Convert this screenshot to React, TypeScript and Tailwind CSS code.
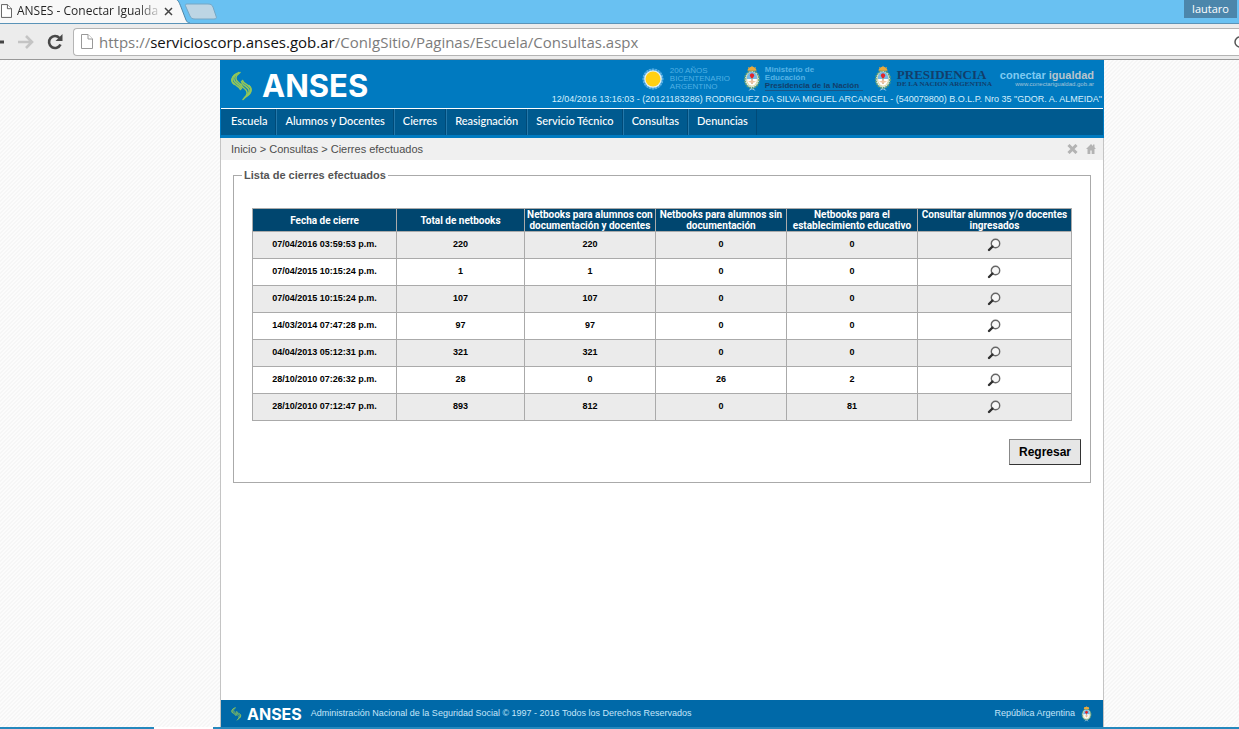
import React from "react";

const NAV = ["Escuela", "Alumnos y Docentes", "Cierres", "Reasignación", "Servicio Técnico", "Consultas", "Denuncias"];

const COLUMNS = [
  "Fecha de cierre",
  "Total de netbooks",
  "Netbooks para alumnos con documentación y docentes",
  "Netbooks para alumnos sin documentación",
  "Netbooks para el establecimiento educativo",
  "Consultar alumnos y/o docentes ingresados",
];

const ROWS: [string, number, number, number, number][] = [
  ["07/04/2016 03:59:53 p.m.", 220, 220, 0, 0],
  ["07/04/2015 10:15:24 p.m.", 1, 1, 0, 0],
  ["07/04/2015 10:15:24 p.m.", 107, 107, 0, 0],
  ["14/03/2014 07:47:28 p.m.", 97, 97, 0, 0],
  ["04/04/2013 05:12:31 p.m.", 321, 321, 0, 0],
  ["28/10/2010 07:26:32 p.m.", 28, 0, 26, 2],
  ["28/10/2010 07:12:47 p.m.", 893, 812, 0, 81],
];

function AnsesMark({ className }: { className: string }) {
  return (
    <svg viewBox="0 0 22 30" className={className} fill="none" stroke="#93c759" strokeWidth="1.500" strokeLinecap="round" aria-hidden="true">
      <path d="M5.500 2.500C-.5 6.500 0 11 4 13.500c3 2 5 3 5.500 5" />
      <path d="M7.500 1.500C1 6 2 10 6 12.500c2.500 1.500 4 3 4.500 5" />
      <path d="M9 1.500C3.500 5.500 4 9 7.500 11.500c2 1.500 3.500 3 3.500 4.500" />
      <path d="M3.500 4C-.5 8 .5 11 3 13" />
      <path d="M16.500 27.500C22.500 23.500 22 19 18 16.500c-3-2-5-3-5.500-5" transform="translate(-1 -2)" />
      <path d="M14.500 28.500C21 24 20 20 16 17.500c-2.500-1.500-4-3-4.500-5" transform="translate(-1 -2)" />
      <path d="M13 29.500C18.500 25 18 21 14.500 18.500c-2-1.500-3.500-3-3.500-4.500" transform="translate(-1 -1)" />
      <path d="M18.500 25.500C22 22 21.500 18.500 19 16.500" transform="translate(-1 -2)" />
    </svg>
  );
}

function PageIcon({ className }: { className: string }) {
  return (
    <svg viewBox="0 0 12 15" className={className} fill="#fff" stroke="currentColor" aria-hidden="true">
      <path d="M.5.5h6.500l4.500 4.500v9.500H.5z" />
      <path d="M7 .5V5h4.500" />
    </svg>
  );
}

function Emblem({ className }: { className: string }) {
  return (
    <svg viewBox="0 0 20 28" className={className} aria-hidden="true">
      <path d="M6 28l4-5 4 5-4-2z" fill="#9cc9e6" />
      <ellipse cx="10" cy="15" rx="8" ry="9.500" fill="#e4efe4" stroke="#5b9c78" strokeWidth="2" strokeDasharray="2 1" />
      <ellipse cx="10" cy="14.500" rx="6" ry="8" fill="#fff" stroke="#c8b45a" strokeWidth=".6" />
      <path d="M4 14.500a6 8 0 0 1 12 0z" fill="#74b9e8" />
      <path d="M10 10v10" stroke="#b98a55" strokeWidth="1.200" />
      <path d="M5.500 17.500l4.500-1.500 4.500 1.500-4.500 1.500z" fill="#efc3a0" />
      <path d="M7.500 11a2.500 2.800 0 0 1 5 0l-1.500 2.500H9z" fill="#e0262b" />
      <path d="M5 5.500a5 4.500 0 0 1 10 0z" fill="#e9a93c" />
      <path d="M10 0v3M6 1.500l1.500 2M14 1.500l-1.500 2" stroke="#e9a93c" />
    </svg>
  );
}

function Sun() {
  const rays = Array.from({ length: 20 }, (_, i) => i * 18);
  return (
    <svg viewBox="0 0 24 24" className="size-6" aria-hidden="true">
      <circle cx="12" cy="12" r="10.500" fill="#2f97d6" />
      {rays.map((a) => (
        <path key={a} d="M12 1.500v2" stroke="#5fb4e6" strokeWidth="1.500" transform={`rotate(${a} 12 12)`} />
      ))}
      <circle cx="12" cy="12" r="8.800" fill="#dff0f8" />
      <circle cx="12" cy="12" r="7.500" fill="#ffd013" />
    </svg>
  );
}

function Magnifier() {
  return (
    <svg viewBox="0 0 14 14" className="mx-auto size-[14px]" fill="none" aria-hidden="true">
      <circle cx="8.500" cy="5.500" r="4.200" fill="#f7f7f7" stroke="#666" strokeWidth="1.400" />
      <path d="M5.500 8.500L2 12" stroke="#2f2f2f" strokeWidth="2.400" strokeLinecap="round" />
    </svg>
  );
}

function Browser() {
  return (
    <div className="font-['Open_Sans',sans-serif]">
      <div className="flex h-6 items-end justify-between border-b border-[#5a93b8] bg-[#69c1f2]">
        <div className="flex h-6 items-start">
          <div className="relative flex h-6 w-[190px] items-center pl-px text-xs text-[#333]">
            <svg viewBox="0 0 190 24" preserveAspectRatio="none" className="absolute inset-0 size-full" aria-hidden="true">
              <path d="M0 0H174c4 0 5 3 7 8l5 13c1 2 2 3 4 3H0z" fill="#f8f8f8" />
              <path d="M174 0c4 0 5 3 7 8l5 13c1 2 2 3 4 3" fill="none" stroke="#4f86a8" />
            </svg>
            <PageIcon className="relative h-[14px] w-[11px] shrink-0 text-[#555]" />
            <span className="relative ml-[5px] bg-gradient-to-r from-[#222] from-85% to-[#ccc] bg-clip-text whitespace-nowrap text-transparent">
              ANSES - Conectar Igualda
            </span>
            <button type="button" aria-label="Cerrar pestaña" className="relative ml-1.5">
              <svg viewBox="0 0 9 9" className="size-[9px]" stroke="#444" strokeWidth="1.500">
                <path d="M1 1l7 7M8 1L1 8" />
              </svg>
            </button>
          </div>
          <button type="button" aria-label="Pestaña nueva" className="-ml-[6px] mt-1">
            <svg viewBox="0 0 34 17" className="h-[17px] w-[34px]">
              <path d="M3 1h21c3 0 4 1 5 3l3 9c1 2 0 3-2 3H11c-3 0-4-1-5-3L2 4c-1-2-1-3 1-3z" fill="#bdd5e4" stroke="#76a7c5" />
            </svg>
          </button>
        </div>
        <button type="button" className="mr-0.5 h-[18px] w-[53px] self-start bg-[#4c86ab] text-center text-[11px] leading-[16px] text-white">lautaro</button>
      </div>
      <div className="flex h-9 items-center border-b border-[#999] bg-[#ececec] py-1">
        <button type="button" aria-label="Atrás" className="w-[5px]">
          <svg viewBox="0 0 5 12" className="h-3 w-[5px]"><path d="M0 6h4" stroke="#444" strokeWidth="3" /></svg>
        </button>
        <button type="button" aria-label="Adelante" className="ml-[13px]">
          <svg viewBox="0 0 16 14" className="h-[14px] w-4" fill="none" stroke="#c4c4c4" strokeWidth="2.600"><path d="M0 7h13M8 1l6 6-6 6" /></svg>
        </button>
        <button type="button" aria-label="Recargar" className="ml-[13px]">
          <svg viewBox="0 0 16 16" className="size-4" fill="none">
            <path d="M12.500 4A6 6 0 1 0 13.500 10.500" stroke="#484848" strokeWidth="2.600" />
            <path d="M15.500 0v7h-7z" fill="#484848" />
          </svg>
        </button>
        <div className="ml-[10px] flex h-7 flex-1 items-center rounded-l-sm border border-r-0 border-[#b4b4b4] bg-white pl-[7px]">
          <PageIcon className="h-[15px] w-3 text-[#999]" />
          <a href="#" className="ml-[6px] flex-1 text-[15px] leading-6 whitespace-nowrap text-[#7c7c7c]">
            https://<span className="text-[#111]">servicioscorp.anses.gob.ar</span>/ConIgSitio/Paginas/Escuela/Consultas.aspx
          </a>
          <svg viewBox="0 0 5 12" className="h-3 w-[5px]" fill="none" aria-hidden="true"><circle cx="6" cy="6" r="5" stroke="#555" strokeWidth="1.500" /></svg>
        </div>
      </div>
    </div>
  );
}

function Header() {
  return (
    <header className="bg-[#007ac0] pb-[3px]">
      <div className="flex h-12 justify-between pl-[11px]">
        <div className="flex items-center gap-[9px] pt-1">
          <AnsesMark className="h-[30px] w-[22px]" />
          <span className="font-['Inter',sans-serif] text-[31px] leading-8 font-bold text-white">ANSES</span>
        </div>
        <div className="flex flex-col items-end pt-[5px] pr-[2px]">
          <div className="flex h-[27px] items-center pr-2">
            <Sun />
            <div className="ml-[5px] w-[68px] text-[8px] leading-[8px] text-[#4fb0e4]">
              200 AÑOS<br />BICENTENARIO<br />ARGENTINO
            </div>
            <Emblem className="ml-[5px] h-[27px] w-[18px]" />
            <div className="ml-1 w-[98px] text-[8px] leading-[8px] font-bold whitespace-nowrap text-[#55b3e5]">
              Ministerio de<br />Educación<br />
              <span className="block border-b border-[#1d5685] text-[#123e6b]">Presidencia de la Nación</span>
            </div>
            <Emblem className="ml-[11px] h-[27px] w-[18px]" />
            <div className="ml-[5px] w-[96px] font-['Liberation_Serif',serif] font-bold whitespace-nowrap text-[#123e6b]">
              <div className="text-[13px] leading-[12px]">PRESIDENCIA</div>
              <div className="text-[7px] leading-[7px]">DE LA NACION ARGENTINA</div>
            </div>
            <div className="ml-[7px] text-right">
              <div className="text-[11px] leading-3 font-bold whitespace-nowrap text-[#7fcaf2]">conectar <span className="text-[#b8c4cc]">igualdad</span></div>
              <div className="text-[6px] leading-[7px] text-[#a4c4d8]">www.conectarigualdad.gob.ar</div>
            </div>
          </div>
          <p className="text-[9px] leading-[15px] whitespace-nowrap text-[#d6effc]">
            12/04/2016 13:16:03 - (20121183286) RODRIGUEZ DA SILVA MIGUEL ARCANGEL - (540079800) B.O.L.P. Nro 35 "GDOR. A. ALMEIDA"
          </p>
        </div>
      </div>
      <nav className="mx-px flex h-[27px] border-t border-white bg-[#005a8f] pl-px font-['Lato',sans-serif] text-[11px] leading-6 font-medium text-white">
        {NAV.map((item) => (
          <a key={item} href="#" className="border-r border-l border-r-[#004a78] border-l-[#2478aa] px-2 first:border-l-[#005a8f]">{item}</a>
        ))}
      </nav>
    </header>
  );
}

function ClosingTable() {
  return (
    <table className="w-full table-fixed border-collapse text-center text-[9px] font-bold text-black">
      <colgroup>
        <col className="w-[17.6%]" />
        <col className="w-[15.6%]" />
        <col className="w-[16%]" />
        <col className="w-[16%]" />
        <col className="w-[16%]" />
        <col className="w-[18.8%]" />
      </colgroup>
      <thead>
        <tr className="bg-[#00466f] font-['Roboto',sans-serif] text-[10px] leading-[11px] text-white">
          {COLUMNS.map((c) => <th key={c} className="border border-[#aaa] p-0">{c}</th>)}
        </tr>
      </thead>
      <tbody>
        {ROWS.map((row, i) => (
          <tr key={i} className="h-[27px] odd:bg-[#ebebeb]">
            {row.map((v, j) => <td key={j} className="border border-[#aaa] p-0">{v}</td>)}
            <td className="border border-[#aaa] p-0">
              <button type="button" aria-label="Consultar ingresados" className="block w-full"><Magnifier /></button>
            </td>
          </tr>
        ))}
      </tbody>
    </table>
  );
}

export default function App() {
  return (
    <div className="flex min-h-screen flex-col bg-white font-['Liberation_Sans',Arial,sans-serif]">
      <Browser />
      <div className="flex flex-1 bg-[linear-gradient(135deg,#f6f6f6_25%,#fcfcfc_25%_50%,#f6f6f6_50%_75%,#fcfcfc_75%)] bg-size-[4px_4px] pr-[135px] pl-[220px]">
        <div className="flex flex-1 flex-col border-x border-[#c4c4c4] bg-white">
          <div className="-mx-px"><Header /></div>
          <div className="flex h-[22px] items-center justify-between bg-[#f0f0f0] pr-[7px] pl-[10px] text-[11px] text-[#4d4d4d]">
            <span><a href="#">Inicio</a> &gt; <a href="#">Consultas</a> &gt; Cierres efectuados</span>
            <div className="flex items-center gap-2">
              <button type="button" aria-label="Cerrar">
                <svg viewBox="0 0 11 10" className="h-[10px] w-[11px]" stroke="#b3b3b3" strokeWidth="3"><path d="M1.500 1l8 8M9.500 1l-8 8" /></svg>
              </button>
              <a href="#" aria-label="Inicio">
                <svg viewBox="0 0 10 10" className="size-[10px]" fill="#b3b3b3"><path d="M5 0l5 5H8.500v5h-7V5H0z" /><path d="M7 .5h1.500V4H7z" /><path d="M4 6.500h2V10H4z" fill="#ddd" /></svg>
              </a>
            </div>
          </div>
          <main className="flex-1 px-3 pt-[9px]">
            <fieldset className="border border-[#aaa] px-[18px] pt-[26px] pb-[17px]">
              <legend className="-ml-[10px] px-[2px] text-[11px] leading-[13px] font-bold text-[#555]">Lista de cierres efectuados</legend>
              <ClosingTable />
              <div className="-mr-[9px] mt-[18px] flex justify-end">
                <button type="button" className="border border-t-[#888] border-r-[#333] border-b-[#333] border-l-[#888] bg-[#e6e6e6] px-[9px] py-1 text-xs font-bold text-black">Regresar</button>
              </div>
            </fieldset>
          </main>
          <footer className="flex h-[27px] items-center justify-between bg-[#0069a8] pr-[11px] pl-[10px] text-[9px] text-[#c5e6fa]">
            <div className="flex items-center">
              <AnsesMark className="h-[14px] w-[11px]" />
              <span className="ml-[5px] font-['Inter',sans-serif] text-[16px] font-bold text-white">ANSES</span>
              <span className="ml-[9px]">Administración Nacional de la Seguridad Social © 1997 - 2016 Todos los Derechos Reservados</span>
            </div>
            <div className="flex items-center gap-1.5">República Argentina <Emblem className="h-4 w-[11px]" /></div>
          </footer>
        </div>
      </div>
      <div className="flex h-[2px] bg-[#2588bd]"><div className="ml-[154px] w-[59px] bg-white" /></div>
    </div>
  );
}
